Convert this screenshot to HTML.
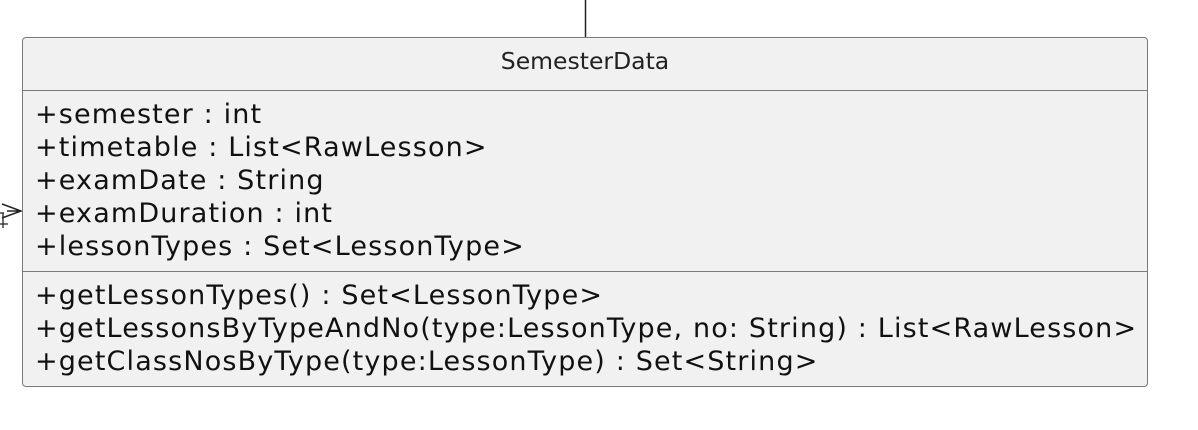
<!DOCTYPE html>
<html><head><style>
html,body{margin:0;padding:0;background:#fff;width:1198px;height:430px;overflow:hidden;position:relative;font-family:"DejaVu Sans",sans-serif;}
.box{position:absolute;left:22px;top:37px;width:1124px;height:348px;background:#f1f1f1;border:1px solid #7a7a7a;border-radius:4px;}
.t{position:absolute;left:0;width:100%;text-align:center;top:9px;font-size:23.5px;color:#222;}
.hr{position:absolute;left:0;width:100%;height:1px;background:#7a7a7a;}
.l{position:absolute;left:12px;font-size:27px;letter-spacing:1.15px;color:#111;white-space:pre;line-height:33px;}
</style></head><body>
<svg width="1198" height="430" style="position:absolute;left:0;top:0">
<line x1="585.5" y1="0" x2="585.5" y2="37" stroke="#222" stroke-width="1.5"/>
<path d="M2 204 L21 211 L2 218 M7 211 L21 211" stroke="#222" stroke-width="1.5" fill="none"/>
<path d="M0 213 L4 213 M3 213 L3 228 M0 224 L8 224" stroke="#222" stroke-width="1.3" fill="none"/>
</svg>
<div class="box">
<div class="t">SemesterData</div>
<div class="hr" style="top:52px"></div>
<div class="l" style="top:60px">+semester : int
+timetable : List&lt;RawLesson&gt;
+examDate : String
+examDuration : int
+lessonTypes : Set&lt;LessonType&gt;</div>
<div class="hr" style="top:233px"></div>
<div class="l" style="top:241px">+getLessonTypes() : Set&lt;LessonType&gt;
+getLessonsByTypeAndNo(type:LessonType, no: String) : List&lt;RawLesson&gt;
+getClassNosByType(type:LessonType) : Set&lt;String&gt;</div>
</div>
</body></html>
